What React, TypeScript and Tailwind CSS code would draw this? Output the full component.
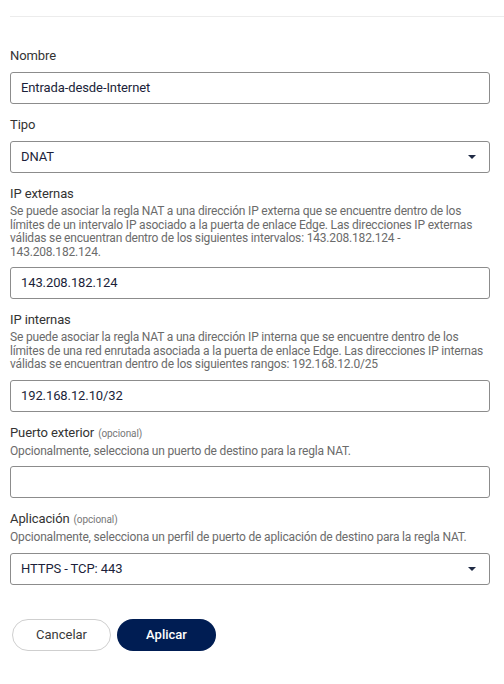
import { ReactNode } from "react";

const FONT = { fontFamily: "Roboto, 'Liberation Sans', sans-serif" };

function Caret() {
  return (
    <svg width="8" height="4" viewBox="0 0 8 4" className="shrink-0">
      <path d="M0 0 L8 0 L4 4 Z" fill="#1f2a44" />
    </svg>
  );
}

function Field({
  label,
  optional,
  help,
  children,
}: {
  label: string;
  optional?: boolean;
  help?: ReactNode;
  children: ReactNode;
}) {
  return (
    <div className="flex flex-col">
      <div className="text-[13px] leading-[16px] tracking-[-0.1px] text-[#333]">
        {label}
        {optional && <span className="ml-1 text-[10px] text-[#777]">(opcional)</span>}
      </div>
      {help && (
        <p className="mt-[3px] text-[12px] leading-[13.5px] tracking-[-0.18px] text-[#6b6b6b]">{help}</p>
      )}
      <div className="mt-[8px]">{children}</div>
    </div>
  );
}

function TextInput({ value }: { value?: string }) {
  return (
    <div className="h-8 flex items-center px-[10px] border border-[#8c8c8c] rounded-[3px] text-[13px] tracking-[-0.1px] text-[#1c1f3a]">
      {value}
    </div>
  );
}

function Select({ value }: { value: string }) {
  return (
    <div className="h-8 flex items-center justify-between pl-[10px] pr-[13px] border border-[#8c8c8c] rounded-[3px] text-[13px] tracking-[-0.1px] text-[#1c1f3a]">
      <span>{value}</span>
      <Caret />
    </div>
  );
}

export default function App() {
  return (
    <div className="bg-white min-h-[684px] pl-[10px] pt-4" style={FONT}>
      <div className="h-px bg-[#ececec]" />

      <div className="w-[480px] pt-[31px] flex flex-col gap-[13px]">
        <Field label="Nombre">
          <TextInput value="Entrada-desde-Internet" />
        </Field>

        <Field label="Tipo">
          <Select value="DNAT" />
        </Field>

        <Field
          label="IP externas"
          help="Se puede asociar la regla NAT a una dirección IP externa que se encuentre dentro de los límites de un intervalo IP asociado a la puerta de enlace Edge. Las direcciones IP externas válidas se encuentran dentro de los siguientes intervalos: 143.208.182.124 - 143.208.182.124."
        >
          <TextInput value="143.208.182.124" />
        </Field>

        <Field
          label="IP internas"
          help="Se puede asociar la regla NAT a una dirección IP interna que se encuentre dentro de los límites de una red enrutada asociada a la puerta de enlace Edge. Las direcciones IP internas válidas se encuentran dentro de los siguientes rangos: 192.168.12.0/25"
        >
          <TextInput value="192.168.12.10/32" />
        </Field>

        <Field
          label="Puerto exterior"
          optional
          help="Opcionalmente, selecciona un puerto de destino para la regla NAT."
        >
          <TextInput />
        </Field>

        <Field
          label="Aplicación"
          optional
          help="Opcionalmente, selecciona un perfil de puerto de aplicación de destino para la regla NAT."
        >
          <Select value="HTTPS - TCP: 443" />
        </Field>
      </div>

      <div className="mt-[34px] ml-[2px] flex gap-[6px]">
        <button className="w-[99px] h-8 rounded-full border border-[#cfcfcf] bg-white text-[13px] text-[#3a3a3a]">
          Cancelar
        </button>
        <button className="w-[99px] h-8 rounded-full bg-[#001d53] text-[13px] font-medium text-white">
          Aplicar
        </button>
      </div>
    </div>
  );
}
